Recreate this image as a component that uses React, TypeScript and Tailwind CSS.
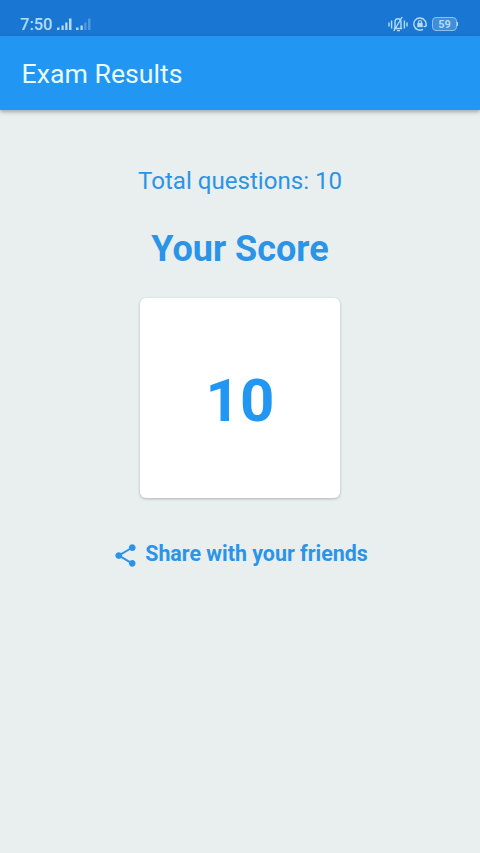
import React, {FunctionComponent} from "react";


const StatusBar: FunctionComponent = () => (
    <div className={'flex items-center justify-between h-9 pl-5 pr-[22px] pt-3 bg-[#1976d2] text-[#b4dcf5]'}>
        <div className={'flex items-center'}>
            <span className={'pt-[3px] text-[16.5px] leading-none font-medium'}>7:50</span>
            <svg className={'ml-1'} width="36" height="14" viewBox="0 0 36 14" fill="currentColor">
                <path d="M1 10.500h2.500V13H1zM5.500 8.500h2.200V13H5.500zM9.200 5.500h2.300V13H9.200zM13 1.500h2.500V13H13z"/>
                <path d="M20 10.500h2.500V13H20zM24.500 8.500h2.200V13h-2.200z"/>
                <path opacity=".35" d="M28.200 5.500h2.300V13h-2.300zM32 1.500h2.500V13H32z"/>
            </svg>
        </div>
        <div className={'flex items-center gap-[5px]'}>
            <svg width="20" height="16" viewBox="0 0 20 16" fill="none" stroke="currentColor" strokeWidth="1.4">
                <path d="M1 6.500v4M3.600 4.500v8M16.400 4.500v8M19 6.500v4"/>
                <path d="M5.800 12.500h8.400M7 12V6.500c0-5 6-5 6 0V12M5.800 15L14.200 1M9 14.600h3"/>
            </svg>
            <svg width="14" height="14" viewBox="0 0 14 14" fill="none" stroke="currentColor" strokeWidth="1.4">
                <path d="M10 12.300A6.100 6.100 0 1 1 12.700 9"/>
                <path d="M10.500 9.300l2.100.3 1-2" strokeWidth="1.200"/>
                <path d="M5.500 6V5c0-2 3-2 3 0v1" strokeWidth="1.200"/>
                <path d="M4.300 5.900h5.400v4.300H4.300z" fill="currentColor" stroke="none"/>
            </svg>
            <div className={'flex items-center'}>
                <span className={'w-[25px] h-3.5 rounded border border-[#8dbfea] bg-[#3e8edb] text-[11px] leading-[13px] font-bold text-center'}>59</span>
                <span className={'w-px h-1 bg-[#b4dcf5]'}/>
            </div>
        </div>
    </div>
)


const App: FunctionComponent = () => {

    const totalQuestions = 10;
    const score = 10;

    return (
        <div className={"min-h-screen bg-[#e9efef] font-['Roboto',sans-serif] text-[#2b94e6]"}>
            <StatusBar/>
            <header className={'flex items-center h-[74px] px-[21.5px] pt-0.5 bg-[#2196f3] shadow-[0_2px_4px_rgba(0,0,0,0.3)]'}>
                <h1 className={'text-[26.700px] text-[#e8fbff]'}>Exam Results</h1>
            </header>

            <main className={'flex flex-col items-center pt-[53px]'}>
                <p className={'text-[24.100px] leading-9'}>Total questions: {totalQuestions}</p>
                <h2 className={'mt-7 text-4xl leading-11 font-bold'}>Your Score</h2>
                <div className={'flex items-center justify-center size-[200px] pt-1.5 mt-[27px] rounded-md bg-white shadow-[0_1px_3px_rgba(0,0,0,0.25)]'}>
                    <span className={'text-[60px] leading-none font-bold text-[#2196f3]'}>{score}</span>
                </div>
                <button className={'flex items-center gap-1.5 mt-10 text-[21.400px] leading-8 font-bold'}>
                    <svg className={'mt-0.5'} width="27" height="27" viewBox="0 0 24 24" fill="currentColor">
                        <path d="M18 16.080c-.76 0-1.440.3-1.960.77L8.910 12.700c.05-.23.09-.46.09-.7s-.04-.47-.09-.7l7.050-4.110c.54.5 1.250.81 2.040.81 1.660 0 3-1.340 3-3s-1.340-3-3-3-3 1.340-3 3c0 .24.04.47.09.7L8.040 9.810C7.500 9.310 6.790 9 6 9c-1.660 0-3 1.340-3 3s1.340 3 3 3c.79 0 1.500-.31 2.040-.81l7.120 4.160c-.05.21-.08.43-.08.65 0 1.610 1.310 2.920 2.920 2.920s2.920-1.310 2.920-2.920-1.310-2.920-2.920-2.920z"/>
                    </svg>
                    Share with your friends
                </button>
            </main>
        </div>
    )
}


export default App;
